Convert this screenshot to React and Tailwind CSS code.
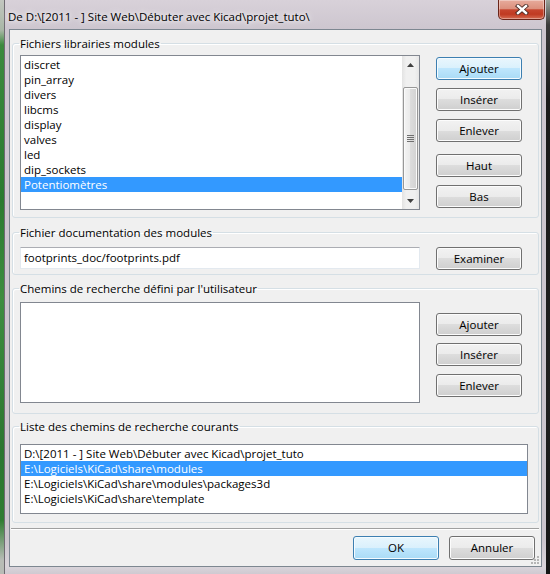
import React from "react";

const libs = [
  "discret",
  "pin_array",
  "divers",
  "libcms",
  "display",
  "valves",
  "led",
  "dip_sockets",
  "Potentiomètres",
];

const paths = [
  "D:\\[2011 - ] Site Web\\Débuter avec Kicad\\projet_tuto",
  "E:\\Logiciels\\KiCad\\share\\modules",
  "E:\\Logiciels\\KiCad\\share\\modules\\packages3d",
  "E:\\Logiciels\\KiCad\\share\\template",
];

function Button({ children, primary, className = "" }) {
  const look = primary
    ? "border-[#3c7fb1] bg-[linear-gradient(180deg,#e9f6fd_0%,#d9f0fc_50%,#bee6fd_50%,#a9dbf6_100%)] shadow-[inset_0_0_0_1px_#f4fbff]"
    : "border-[#707070] bg-[linear-gradient(180deg,#f2f2f2_0%,#ebebeb_50%,#dddddd_50%,#cfcfcf_100%)] shadow-[inset_0_0_0_1px_#fcfcfc]";
  return (
    <button
      className={`flex h-[23px] w-[86px] items-center justify-center rounded-[3px] border text-[11.5px] leading-none text-black ${look} ${className}`}
    >
      {children}
    </button>
  );
}

function Group({ title, className = "", children }) {
  return (
    <fieldset
      className={`ml-[2px] w-[527px] rounded-[3px] border border-[#d5dfe5] shadow-[inset_1px_1px_0_#fff] ${className}`}
    >
      <legend className="ml-[6px] px-[1px] text-[11.5px] leading-[15px] text-black">
        {title}
      </legend>
      {children}
    </fieldset>
  );
}

function Arrow({ up }) {
  return (
    <svg width="7" height="4" viewBox="0 0 7 4">
      <path d={up ? "M0 4 L3.5 0 L7 4 Z" : "M0 0 L3.5 4 L7 0 Z"} fill="#404040" />
    </svg>
  );
}

function ScrollBar() {
  return (
    <div className="flex w-[17px] flex-col bg-[linear-gradient(90deg,#e3e3e3,#f0f0f0_25%,#f0f0f0_75%,#e6e6e6)]">
      <div className="flex h-[17px] items-center justify-center">
        <Arrow up />
      </div>
      <div className="flex-1 px-[1px] pt-[14px]">
        <div className="flex h-[103px] flex-col items-center justify-center gap-[1px] rounded-[2px] border border-[#979797] bg-[linear-gradient(90deg,#f4f4f4,#e9e9e9_50%,#dcdcdc_50%,#d2d2d2)] shadow-[inset_0_0_0_1px_#fafafa]">
          <div className="h-[1px] w-[7px] bg-[#6f6f6f]" />
          <div className="h-[1px] w-[7px] bg-[#6f6f6f]" />
          <div className="h-[1px] w-[7px] bg-[#6f6f6f]" />
          <div className="h-[1px] w-[7px] bg-[#6f6f6f]" />
        </div>
      </div>
      <div className="flex h-[17px] items-center justify-center">
        <Arrow />
      </div>
    </div>
  );
}

function Row({ text, selected }) {
  return (
    <div
      className={`h-[15px] whitespace-nowrap pl-[3px] text-[11.5px] leading-[15px] ${
        selected ? "bg-[#3399ff] text-white" : "text-black"
      }`}
    >
      {text}
    </div>
  );
}

export default function App() {
  return (
    <div className="flex h-[574px] w-[550px] overflow-hidden font-['Open_Sans',sans-serif]">
      <div className="w-[4px] bg-[linear-gradient(180deg,#c2c6bf_0px,#a9b7a6_30px,#3b8a3e_45px,#2b7a2f_200px,#3e8d40_300px,#2a7630_450px,#2f7c32_520px,#b8bcb6_560px)]" />

      <div className="flex w-[542px] flex-col border-l border-[#6f6a72] bg-[linear-gradient(180deg,#d8d1d9_0px,#cdc6cf_29px,#cbc5cd_540px,#d9d4da_567px,#cfc9d1_574px)]">
        <div className="flex h-[29px] items-start">
          <div className="pl-[3px] pt-[9px] text-[11.5px] leading-[15px] text-black [text-shadow:0_0_8px_#ffffff,0_0_4px_#ffffff]">
            De D:\[2011 - ] Site Web\Débuter avec Kicad\projet_tuto\
          </div>
          <div className="ml-auto mr-[1px] flex h-[20px] w-[47px] items-center justify-center rounded-b-[5px] border border-t-0 border-[#6a2519] bg-[linear-gradient(180deg,#e7ab9c_0%,#dc907d_45%,#c6452e_52%,#c03a22_75%,#d56c52_100%)] shadow-[inset_0_0_0_1px_rgba(255,255,255,0.35)]">
            <svg width="14" height="11" viewBox="0 0 14 11">
              <path d="M3 2 L11 9 M11 2 L3 9" stroke="#4a2a24" strokeWidth="4.2" strokeLinecap="square" />
              <path d="M3 2 L11 9 M11 2 L3 9" stroke="#ffffff" strokeWidth="2.4" strokeLinecap="square" />
            </svg>
          </div>
        </div>

        <div className="relative ml-[4px] flex h-[538px] w-[533px] flex-col border border-[#7d8791] bg-[#f0f0f0]">
          <Group title="Fichiers librairies modules" className="mt-[6px] h-[182px]">
            <div className="flex pl-[7px] pt-[4px]">
              <div className="flex h-[155px] w-[400px] border border-[#828790] bg-white">
                <div className="flex-1 pt-[1px]">
                  {libs.map((l, i) => (
                    <Row key={l} text={l} selected={i === libs.length - 1} />
                  ))}
                </div>
                <ScrollBar />
              </div>
              <div className="ml-[16px] mt-[2px] flex flex-col">
                <Button primary>Ajouter</Button>
                <Button className="mt-[8px]">Insérer</Button>
                <Button className="mt-[8px]">Enlever</Button>
                <Button className="mt-[12px]">Haut</Button>
                <Button className="mt-[8px]">Bas</Button>
              </div>
            </div>
          </Group>

          <Group title="Fichier documentation des modules" className="mt-[7px] h-[50px]">
            <div className="flex items-start pl-[7px] pt-[7px]">
              <div className="flex h-[22px] w-[400px] items-center border border-[#e3e9ef] border-t-[#abadb3] bg-white pl-[3px] text-[11.5px] text-black">
                footprints_doc/footprints.pdf
              </div>
              <Button className="ml-[16px]">Examiner</Button>
            </div>
          </Group>

          <Group
            title="Chemins de recherche défini par l'utilisateur"
            className="mt-[6px] h-[133px]"
          >
            <div className="flex pl-[7px] pt-[6px]">
              <div className="h-[101px] w-[400px] border border-[#828790] bg-white" />
              <div className="ml-[16px] mt-[11px] flex flex-col">
                <Button>Ajouter</Button>
                <Button className="mt-[7px]">Insérer</Button>
                <Button className="mt-[8px]">Enlever</Button>
              </div>
            </div>
          </Group>

          <Group
            title="Liste des chemins de recherche courants"
            className="mt-[5px] h-[104px]"
          >
            <div className="pl-[7px] pt-[10px]">
              <div className="h-[70px] w-[508px] border border-[#828790] bg-white pt-[1px]">
                {paths.map((p, i) => (
                  <Row key={p} text={p} selected={i === 1} />
                ))}
              </div>
            </div>
          </Group>

          <div className="ml-[1px] mt-[5px] w-[528px] border-t border-b border-t-[#a0a0a0] border-b-white" />

          <div className="mt-[6px] flex justify-end gap-[10px] pr-[6px]">
            <Button primary className="h-[24px] w-[85px]">
              OK
            </Button>
            <Button className="h-[24px]">Annuler</Button>
          </div>

          <svg
            className="absolute bottom-[1px] right-[1px]"
            width="10"
            height="10"
            viewBox="0 0 10 10"
          >
            <rect x="7" y="1" width="2" height="2" fill="#b5b5b5" />
            <rect x="4" y="4" width="2" height="2" fill="#b5b5b5" />
            <rect x="7" y="4" width="2" height="2" fill="#b5b5b5" />
            <rect x="1" y="7" width="2" height="2" fill="#b5b5b5" />
            <rect x="4" y="7" width="2" height="2" fill="#b5b5b5" />
            <rect x="7" y="7" width="2" height="2" fill="#b5b5b5" />
          </svg>
        </div>
      </div>

      <div className="w-[4px] bg-[linear-gradient(180deg,#9aa39a_0px,#3a3a3a_25px,#1a1a1a_100px,#202020_400px,#151515_574px)]" />
    </div>
  );
}
